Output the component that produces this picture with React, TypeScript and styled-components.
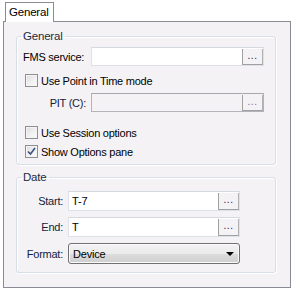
import React from 'react';
import styled, { createGlobalStyle } from 'styled-components';

const GlobalStyle = createGlobalStyle`
  html, body {
    margin: 0;
    padding: 0;
    background: #ffffff;
  }
  body {
    font-family: 'Liberation Sans', Arial, sans-serif;
    font-size: 11px;
    color: #000000;
  }
  * {
    box-sizing: border-box;
  }
`;

const Page = styled.div`
  width: 292px;
  height: 289px;
  padding: 2px 0 0 3px;
`;

const TabStrip = styled.div`
  display: flex;
  padding-left: 2px;
  position: relative;
  z-index: 1;
  margin-bottom: -1px;
`;

const Tab = styled.div`
  width: 49px;
  height: 20px;
  padding: 0 0 0 3px;
  border: 1px solid #898c95;
  border-bottom: none;
  background: #ffffff;
  line-height: 18px;
  font-size: 11.5px;
  letter-spacing: -0.2px;
`;

const TabPanel = styled.div`
  width: 288px;
  height: 267px;
  border: 1px solid #898c95;
  background: #f5f2f5;
  padding: 8px 0 0 12px;
`;

const Group = styled.fieldset<{ $height: number; $padTop: number; $gapAbove?: number }>`
  width: 260px;
  height: ${(p) => p.$height}px;
  margin: ${(p) => p.$gapAbove || 0}px 0 0 0;
  padding: ${(p) => p.$padTop}px 0 0 6px;
  border: 1px solid #d5dfe5;
  border-radius: 3px;
  box-shadow: inset 1px 1px 0 #ffffff, 1px 1px 0 #ffffff;
  min-inline-size: auto;
`;

const Legend = styled.legend`
  padding: 0 2px;
  margin-left: -2px;
  line-height: 13px;
  height: 13px;
  font-size: 11.5px;
  color: #1e2a40;
  letter-spacing: -0.2px;
`;

const Row = styled.div<{ $top?: number; $height?: number }>`
  display: flex;
  align-items: center;
  height: ${(p) => p.$height || 19}px;
  margin-top: ${(p) => p.$top || 0}px;
`;

const Label = styled.label<{ $width: number; $align?: 'left' | 'right' }>`
  width: ${(p) => p.$width}px;
  flex: none;
  text-align: ${(p) => p.$align || 'right'};
  padding-right: ${(p) => (p.$align === 'left' ? 0 : 5)}px;
  white-space: nowrap;
  letter-spacing: -0.25px;
  color: ${(p) => (p.$align === 'left' ? '#000000' : '#13223a')};
`;

const TextBox = styled.div<{ $width: number; $disabled?: boolean }>`
  display: flex;
  width: ${(p) => p.$width}px;
  height: 100%;
  border: 1px solid ${(p) => (p.$disabled ? '#b4b4b8' : '#dde1e8')};
  border-top-color: ${(p) => (p.$disabled ? '#a8a8ac' : '#d4d8df')};
  background: ${(p) => (p.$disabled ? '#f5f2f5' : '#ffffff')};
`;

const TextValue = styled.span`
  flex: 1;
  padding-left: 3px;
  display: flex;
  align-items: center;
  letter-spacing: -0.2px;
`;

const BrowseButton = styled.div<{ $disabled?: boolean }>`
  width: 21px;
  flex: none;
  margin: 1px 0 0 0;
  border: 1px solid #a0a0a0;
  border-top: none;
  border-right-color: #b0b0b0;
  background: ${(p) => (p.$disabled ? '#f5f2f5' : '#f4f2f4')};
  display: flex;
  align-items: center;
  justify-content: center;
  padding-bottom: 3px;
  font-size: 10px;
  color: ${(p) => (p.$disabled ? '#7a6aa0' : '#20203a')};
  letter-spacing: 0.5px;
`;

const CheckRow = styled.label<{ $top: number; $indent?: number }>`
  display: flex;
  align-items: center;
  height: 13px;
  margin-top: ${(p) => p.$top}px;
  margin-left: ${(p) => p.$indent || 2}px;
  gap: 3px;
  letter-spacing: -0.25px;
`;

const CheckBox = styled.span`
  width: 13px;
  height: 13px;
  flex: none;
  border: 1px solid #8e8f8f;
  background: linear-gradient(135deg, #dcdcdc 0%, #f2f2f2 60%, #fbfbfb 100%);
  box-shadow: inset 0 0 0 1px #f4f4f4;
  display: flex;
  align-items: center;
  justify-content: center;
`;

const Select = styled.div`
  width: 172px;
  height: 21px;
  border: 1px solid #707070;
  border-radius: 3px;
  background: linear-gradient(#f2f2f2 0%, #ebebeb 50%, #dddddd 51%, #cfcfcf 100%);
  box-shadow: inset 0 0 0 1px #fbfbfb;
  display: flex;
  align-items: center;
  justify-content: space-between;
  padding: 0 5px 0 4px;
  letter-spacing: -0.2px;
`;

const Arrow = styled.span`
  width: 0;
  height: 0;
  border-left: 4px solid transparent;
  border-right: 4px solid transparent;
  border-top: 4px solid #000000;
  margin-top: 1px;
`;

const Check: React.FC<{ checked?: boolean }> = ({ checked }) => (
  <CheckBox>
    {checked && (
      <svg width="9" height="9" viewBox="0 0 9 9">
        <path d="M1 4.5 L3.5 7 L8 1" fill="none" stroke="#3c5280" strokeWidth="1.6" />
      </svg>
    )}
  </CheckBox>
);

const Field: React.FC<{ value?: string; width: number; disabled?: boolean }> = ({
  value,
  width,
  disabled,
}) => (
  <TextBox $width={width} $disabled={disabled}>
    <TextValue>{value}</TextValue>
    <BrowseButton $disabled={disabled}>...</BrowseButton>
  </TextBox>
);

const App: React.FC = () => {
  return (
    <Page>
      <GlobalStyle />
      <TabStrip>
        <Tab>General</Tab>
      </TabStrip>
      <TabPanel>
        <Group $height={135} $padTop={4}>
          <Legend>General</Legend>
          <Row>
            <Label $width={68} $align="left">
              FMS service:
            </Label>
            <Field width={173} />
          </Row>
          <CheckRow $top={8}>
            <Check />
            Use Point in Time mode
          </CheckRow>
          <Row $top={6}>
            <Label $width={68}>PIT (C):</Label>
            <Field width={173} disabled />
          </Row>
          <CheckRow $top={14}>
            <Check />
            Use Session options
          </CheckRow>
          <CheckRow $top={6}>
            <Check checked />
            Show Options pane
          </CheckRow>
        </Group>
        <Group $height={102} $padTop={7} $gapAbove={6}>
          <Legend>Date</Legend>
          <Row $height={20}>
            <Label $width={45}>Start:</Label>
            <Field value="T-7" width={172} />
          </Row>
          <Row $height={20} $top={6}>
            <Label $width={45}>End:</Label>
            <Field value="T" width={172} />
          </Row>
          <Row $height={21} $top={6}>
            <Label $width={45}>Format:</Label>
            <Select>
              Device
              <Arrow />
            </Select>
          </Row>
        </Group>
      </TabPanel>
    </Page>
  );
};

export default App;
